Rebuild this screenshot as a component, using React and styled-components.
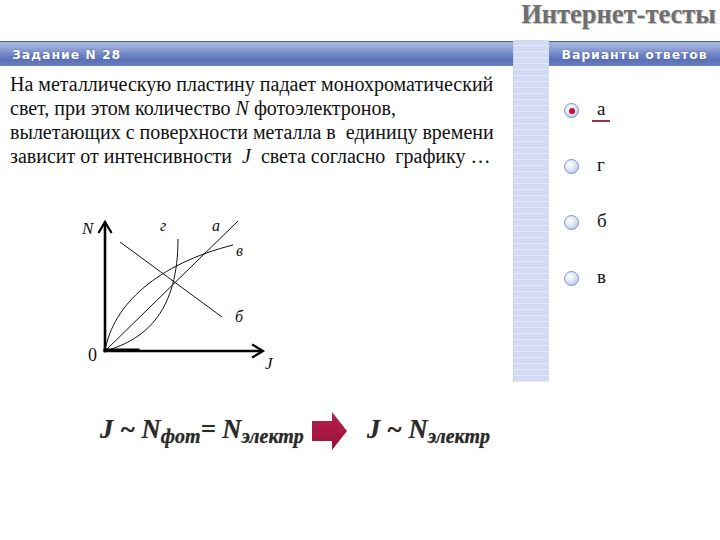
import React from "react";
import styled, { createGlobalStyle } from "styled-components";

// общие значения
const serif = `"Liberation Serif", "Times New Roman", serif`;
const headerFont = `"DejaVu Sans", Verdana, sans-serif`;
const textColor = "#111";
const accent = "#98103c";

const GlobalStyle = createGlobalStyle`
  html, body {
    margin: 0;
    padding: 0;
    background: #fff;
  }
`;

const Page = styled.div`
  width: 720px;
  height: 540px;
  overflow: hidden;
  font-family: ${serif};
  color: ${textColor};
`;

const TitleRow = styled.div`
  height: 40px;
  display: flex;
  justify-content: flex-end;
  align-items: flex-start;
  padding-right: 4px;
`;

const SiteTitle = styled.h1`
  margin: 0;
  font-family: ${serif};
  font-size: 26.5px;
  line-height: 28px;
  font-weight: 700;
  color: #6f6f6f;
  text-shadow: 1px 1px 0 #c4c4c4;
`;

const Main = styled.div`
  display: grid;
  grid-template-columns: 513px 36px 171px;
  height: 342px;
`;

const Column = styled.div`
  display: flex;
  flex-direction: column;
  min-width: 0;
`;

// синяя полоса заголовка
const Header = styled.div`
  margin-top: 1px;
  height: 25px;
  display: flex;
  align-items: center;
  justify-content: ${({ $center }) => ($center ? "center" : "flex-start")};
  padding-left: ${({ $center }) => ($center ? "0" : "12px")};
  box-sizing: border-box;
  border-top: 1px solid #4a5c98;
  background: linear-gradient(
    #a9b8e0 0%,
    #93a5d6 25%,
    #7287c6 50%,
    #5a70b6 75%,
    #6b80c0 100%
  );
  color: #fff;
  font-family: ${headerFont};
  font-size: 12.5px;
  font-weight: 700;
  letter-spacing: 0.9px;
  text-shadow: 0 0 1px #2a3a78;
`;

const Divider = styled.div`
  background: repeating-linear-gradient(
    #d2dbf3 0px,
    #d2dbf3 5px,
    #e3e9f9 5px,
    #e3e9f9 6px
  );
  border-left: 1px solid #c9d2ee;
`;

const Question = styled.p`
  margin: 6px 0 0 10px;
  font-size: 20px;
  line-height: 24px;
  white-space: nowrap;
`;

const Var = styled.i`
  font-family: ${serif};
  font-style: italic;
`;

const Graph = styled.svg`
  display: block;
  margin: 41px 0 0 78px;
  overflow: visible;
`;

const Options = styled.ul`
  list-style: none;
  margin: 0;
  padding: 37px 0 0 15px;
  display: flex;
  flex-direction: column;
  gap: 41px;
`;

const Option = styled.li`
  display: flex;
  align-items: center;
  height: 15px;
  gap: 18px;
`;

const Radio = styled.span`
  width: 15px;
  height: 15px;
  border-radius: 50%;
  box-sizing: border-box;
  border: 1px solid #8393bf;
  background: radial-gradient(circle at 40% 35%, #ffffff 0%, #dfe6f6 45%, #a8b8de 100%);
  display: flex;
  align-items: center;
  justify-content: center;

  &::after {
    content: "";
    width: 6px;
    height: 6px;
    border-radius: 50%;
    background: ${({ $checked }) => ($checked ? "#c0103a" : "transparent")};
  }
`;

const OptionLabel = styled.span`
  position: relative;
  font-size: 19px;
  line-height: 15px;
  margin-top: -4px;

  &::after {
    content: "";
    display: ${({ $focused }) => ($focused ? "block" : "none")};
    position: absolute;
    left: -5px;
    right: -5px;
    bottom: -6px;
    height: 2px;
    background: #a02a50;
  }
`;

const FormulaRow = styled.div`
  display: flex;
  align-items: center;
  padding-left: 100px;
  margin-top: 26px;
  height: 46px;
`;

const Formula = styled.span`
  font-family: ${serif};
  font-style: italic;
  font-weight: 700;
  font-size: 26.5px;
  color: #2a2a2a;
  white-space: nowrap;
  text-shadow: 0 0 1px #888;
`;

const Sub = styled.sub`
  font-size: 20px;
  vertical-align: -5px;
`;

const ArrowIcon = styled.svg`
  flex: none;
  margin: 0 20px 0 8px;
`;

const Arrow = () => (
  <ArrowIcon width="35" height="38" viewBox="0 0 35 38">
    <defs>
      <linearGradient id="ar" x1="0" y1="0" x2="0" y2="1">
        <stop offset="0" stopColor="#b8204c" />
        <stop offset="1" stopColor={accent} />
      </linearGradient>
    </defs>
    <path d="M0 9 H20 V0 L35 19 L20 38 V29 H0 Z" fill="url(#ar)" />
  </ArrowIcon>
);

const Plot = () => (
  <Graph width="220" height="170" viewBox="0 0 220 170">
    <g fill="none" stroke="#111" strokeWidth="1">
      {/* а */}
      <line x1="27" y1="142" x2="160" y2="12" />
      {/* в */}
      <path d="M27 142 C 35 95, 80 55, 155 36" />
      {/* г */}
      <path d="M27 142 C 70 130, 100 100, 100 30" />
      {/* б */}
      <line x1="42" y1="33" x2="144" y2="108" />
    </g>
    <g stroke="#000" strokeWidth="2.6" fill="none" strokeLinecap="square">
      <line x1="27" y1="142" x2="27" y2="14" />
      <polyline points="21,23 27,13 33,23" strokeWidth="2.2" />
      <line x1="27" y1="142" x2="183" y2="142" />
      <polyline points="175,136 185,142 175,148" strokeWidth="2.2" />
      <line x1="27" y1="141" x2="60" y2="141" strokeWidth="3" />
    </g>
    <g fontFamily={serif} fill="#111">
      <text x="4" y="25" fontSize="17" fontStyle="italic">N</text>
      <text x="10" y="152" fontSize="18">0</text>
      <text x="187" y="160" fontSize="17" fontStyle="italic">J</text>
      <text x="82" y="22" fontSize="16" fontStyle="italic">г</text>
      <text x="134" y="22" fontSize="16" fontStyle="italic">а</text>
      <text x="158" y="47" fontSize="16" fontStyle="italic">в</text>
      <text x="157" y="113" fontSize="16" fontStyle="italic">б</text>
    </g>
  </Graph>
);

const answers = [
  { label: "а", checked: true },
  { label: "г" },
  { label: "б" },
  { label: "в" },
];

export default function App() {
  return (
    <Page>
      <GlobalStyle />
      <TitleRow>
        <SiteTitle>Интернет-тесты</SiteTitle>
      </TitleRow>
      <Main>
        <Column>
          <Header>Задание N 28</Header>
          <Question>
            На металлическую пластину падает монохроматический
            <br />
            свет, при этом количество <Var>N</Var> фотоэлектронов,
            <br />
            вылетающих с поверхности металла в&nbsp; единицу времени
            <br />
            зависит от интенсивности&nbsp; <Var>J</Var>&nbsp; света согласно&nbsp; графику …
          </Question>
          <Plot />
        </Column>
        <Divider />
        <Column>
          <Header $center>Варианты ответов</Header>
          <Options>
            {answers.map((a) => (
              <Option key={a.label}>
                <Radio $checked={a.checked} />
                <OptionLabel $focused={a.checked}>{a.label}</OptionLabel>
              </Option>
            ))}
          </Options>
        </Column>
      </Main>
      <FormulaRow>
        <Formula>
          J ~ N<Sub>фот</Sub>= N<Sub>электр</Sub>
        </Formula>
        <Arrow />
        <Formula>
          J ~ N<Sub>электр</Sub>
        </Formula>
      </FormulaRow>
    </Page>
  );
}
